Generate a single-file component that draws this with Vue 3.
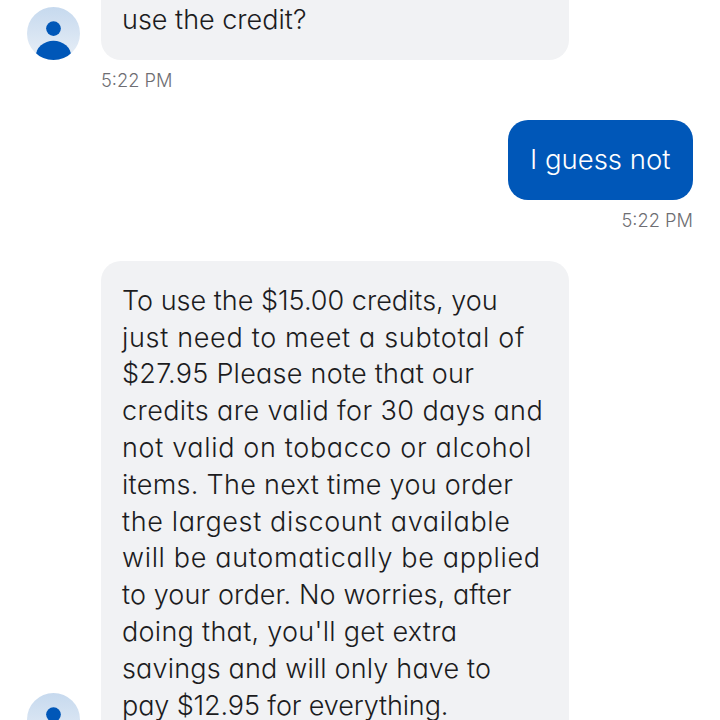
<script setup>
const lines = [
  { text: 'To use the $15.00 credits, you', spacing: 0 },
  { text: 'just need to meet a subtotal of', spacing: 0.68 },
  { text: '$27.95 Please note that our', spacing: 0.25 },
  { text: 'credits are valid for 30 days and', spacing: 0.4 },
  { text: 'not valid on tobacco or alcohol', spacing: 0.66 },
  { text: 'items. The next time you order', spacing: 0.3 },
  { text: 'the largest discount available', spacing: 0.63 },
  { text: 'will be automatically be applied', spacing: 0.66 },
  { text: 'to your order. No worries, after', spacing: 0.1 },
  { text: "doing that, you'll get extra", spacing: 0.29 },
  { text: 'savings and will only have to', spacing: 0.17 },
  { text: 'pay $12.95 for everything.', spacing: -0.12 }
]
</script>

<template>
  <div class="screen">
    <div class="chat">
      <div class="row">
        <svg class="avatar" viewBox="0 0 54 54">
          <defs>
            <linearGradient id="avatarBg" x1="0" y1="0" x2="0" y2="1">
              <stop offset="0" stop-color="#c6d9ee" />
              <stop offset="1" stop-color="#e8eff7" />
            </linearGradient>
            <clipPath id="avatarClip"><circle cx="27" cy="27" r="27" /></clipPath>
          </defs>
          <circle cx="27" cy="27" r="27" fill="url(#avatarBg)" />
          <circle cx="27" cy="22" r="7.5" fill="#0057b8" />
          <ellipse cx="27" cy="50" rx="18" ry="15.5" fill="#0057b8" clip-path="url(#avatarClip)" />
        </svg>
        <div class="bubble first"><span class="line">use the credit?</span></div>
      </div>
      <div class="time">5:22 PM</div>

      <div class="sent">I guess not</div>
      <div class="time right">5:22 PM</div>

      <div class="row second">
        <svg class="avatar" viewBox="0 0 54 54">
          <circle cx="27" cy="27" r="27" fill="url(#avatarBg)" />
          <circle cx="27" cy="22" r="7.5" fill="#0057b8" />
          <ellipse cx="27" cy="50" rx="18" ry="15.5" fill="#0057b8" clip-path="url(#avatarClip)" />
        </svg>
        <div class="bubble">
          <span
            v-for="line in lines"
            :key="line.text"
            class="line"
            :style="{ letterSpacing: line.spacing + 'px' }"
          >{{ line.text }}</span>
        </div>
      </div>
    </div>
  </div>
</template>

<style>
html, body {
  margin: 0;
  background: #fff;
}
</style>

<style scoped>
.screen {
  width: 720px;
  height: 720px;
  overflow: hidden;
  background: #fff;
  font-family: Inter, "Open Sans", sans-serif;
  font-feature-settings: "cv11";
}
.chat {
  margin-top: -42px;
  padding: 0 27px;
  display: flex;
  flex-direction: column;
}
.row {
  display: flex;
  align-items: flex-end;
  gap: 21px;
}
.avatar {
  width: 53px;
  height: 53px;
  flex-shrink: 0;
}
.bubble {
  width: 426px;
  padding: 22px 21px;
  background: #f1f2f4;
  border-radius: 20px;
  color: #1c1c1e;
  font-size: 27px;
  font-weight: 300;
  line-height: 36.8px;
}
.bubble.first {
  padding-top: 44px;
  padding-bottom: 21px;
}
.line {
  display: block;
  white-space: nowrap;
}
.time {
  margin: 9px 0 0 74px;
  color: #6e6e73;
  font-size: 18.3px;
  font-weight: 300;
  line-height: 23px;
}
.time.right {
  margin: 9px 0 0;
  align-self: flex-end;
}
.sent {
  align-self: flex-end;
  margin-top: 28px;
  padding: 0 22.5px;
  height: 80px;
  line-height: 78px;
  background: #0057b8;
  border-radius: 20px;
  color: #fff;
  font-size: 27.5px;
  font-weight: 300;
}
.second {
  margin-top: 29px;
}
</style>
